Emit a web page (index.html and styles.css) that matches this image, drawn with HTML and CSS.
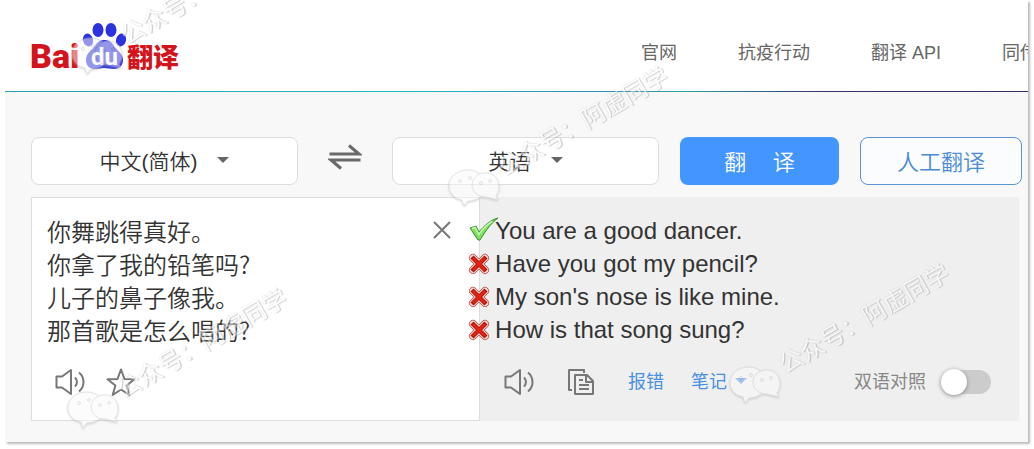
FILE: index.html
```html
<!DOCTYPE html>
<html lang="zh-CN">
<head>
    <meta charset="UTF-8">
    <meta name="viewport" content="width=device-width, initial-scale=1.0">
    <title>百度翻译</title>
    <link rel="stylesheet" href="styles.css">
</head>
<body>
    <svg class="sprite" aria-hidden="true">
        <symbol id="icon-speaker" viewBox="0 0 30 28">
            <path d="M1.500 8.500h5.500l9-6.500v24l-9-6.500H1.500z M20 9.500c2.600 2.400 2.600 6.600 0 9 M24 4.500c6 5 6 14 0 19"/>
        </symbol>
        <symbol id="icon-wrong" viewBox="0 0 22 22">
            <path d="M5 5l12 12M17 5L5 17" stroke="#b8473d" stroke-width="8" stroke-linecap="round"/>
            <path d="M5 5l12 12M17 5L5 17" stroke="#fbe3df" stroke-width="6.500" stroke-linecap="round"/>
            <path d="M4 4l14 14M18 4L4 18" stroke="#b51408" stroke-width="4.500"/>
            <path d="M5 5l12 12M17 5L5 17" stroke="#e22314" stroke-width="2.500"/>
        </symbol>
        <symbol id="icon-wechat" viewBox="0 0 52 38">
            <path d="M20 1C9 1 1 8 1 17c0 5 3 9 7 12l6 2 2 6 4-5c10 0 18-7 18-15S30 1 20 1z"/>
            <path d="M38 4c-8 0-14 5-14 12s6 12 14 12l8 2 4 1-2-4c2-3 3-6 3-9 0-8-5-14-13-14z"/>
            <circle cx="12" cy="12" r="1.500"/>
            <circle cx="22" cy="9" r="1.500"/>
            <circle cx="33" cy="14" r="1.500"/>
            <circle cx="42" cy="12" r="1.500"/>
        </symbol>
    </svg>

    <div class="page">
        <header class="header">
            <a class="logo" href="#" aria-label="百度翻译">
                <svg width="150" height="50" viewBox="0 0 150 50">
                    <text class="logo-bai" x="-1" y="47">Bai</text>
                    <g fill="#2c32dd">
                        <ellipse cx="57" cy="19" rx="5" ry="6.500" transform="rotate(-15 57 19)"/>
                        <ellipse cx="67" cy="9" rx="5.500" ry="7"/>
                        <ellipse cx="80" cy="9" rx="5.500" ry="7"/>
                        <ellipse cx="90" cy="19" rx="5" ry="6.500" transform="rotate(15 90 19)"/>
                        <path d="M73 19c-5 0-7 3-9 6-3 4-9 7-9 14 0 6 4 9 9 9 4 0 6-1 9-1s6 1 10 1c6 0 9-4 9-9 0-7-6-9-9-14-2-4-5-6-10-6z"/>
                    </g>
                    <text class="logo-du" x="60" y="44">du</text>
                    <text class="logo-name" x="96" y="46">翻译</text>
                </svg>
            </a>
            <nav class="nav">
                <a href="#">官网</a>
                <a href="#">抗疫行动</a>
                <a href="#">翻译 API</a>
                <a href="#">同传</a>
            </nav>
        </header>

        <main class="main">
            <div class="controls">
                <select class="language language-from" aria-label="源语言">
                    <option>中文(简体)</option>
                    <option>英语</option>
                </select>
                <button class="swap" type="button" aria-label="切换语言">
                    <svg width="34" height="28" viewBox="0 0 34 28">
                        <path d="M1.500 11H31L21 2.500M32.500 17H3l10 8.500"/>
                    </svg>
                </button>
                <select class="language language-to" aria-label="目标语言">
                    <option>英语</option>
                    <option>中文(简体)</option>
                </select>
                <button class="btn btn-primary" type="button">翻&emsp;&thinsp;译</button>
                <button class="btn btn-outline" type="button">人工翻译</button>
            </div>

            <div class="panels">
                <section class="panel source">
                    <div class="source-input">
                        <textarea rows="4" aria-label="原文" spellcheck="false">你舞跳得真好。
你拿了我的铅笔吗?
儿子的鼻子像我。
那首歌是怎么唱的?</textarea>
                        <button class="icon-btn clear" type="button" aria-label="清空">
                            <svg width="18" height="18" viewBox="0 0 18 18"><path d="M1 1l16 16M17 1L1 17"/></svg>
                        </button>
                    </div>
                    <div class="tools">
                        <button class="icon-btn" type="button" aria-label="朗读原文">
                            <svg width="30" height="28"><use href="#icon-speaker"/></svg>
                        </button>
                        <button class="icon-btn" type="button" aria-label="收藏">
                            <svg width="30" height="28" viewBox="0 0 30 28">
                                <path d="M15 1.500l3.500 9.500 10 .3-7.900 6.200 2.700 9.500-8.300-5.500-8.300 5.500 2.700-9.500-7.900-6.200 10-.3z"/>
                            </svg>
                        </button>
                    </div>
                </section>

                <section class="panel target">
                    <ul class="results">
                        <li>
                            <svg class="mark mark-right" width="30" height="26" viewBox="0 0 30 26">
                                <path d="M1 11l6-2 3 6C15 9 21 3 29 1c-8 6-13 14-18 22H9z" fill="#7be05a" stroke="#3c8f2b" stroke-linejoin="round"/>
                                <path d="M3 11.500l3-1 4 7c4-6 8-10 13-13" stroke="#c8f7b5" stroke-width="1.500"/>
                            </svg>You are a good dancer.
                        </li>
                        <li><svg class="mark" width="22" height="22"><use href="#icon-wrong"/></svg>Have you got my pencil?</li>
                        <li><svg class="mark" width="22" height="22"><use href="#icon-wrong"/></svg>My son's nose is like mine.</li>
                        <li><svg class="mark" width="22" height="22"><use href="#icon-wrong"/></svg>How is that song sung?</li>
                    </ul>
                    <div class="tools">
                        <button class="icon-btn" type="button" aria-label="朗读译文">
                            <svg width="30" height="28"><use href="#icon-speaker"/></svg>
                        </button>
                        <button class="icon-btn" type="button" aria-label="复制">
                            <svg width="28" height="28" viewBox="0 0 28 28">
                                <path d="M17 5V2H2v20h3 M8 7h12l6 6v13H8z M19 7v7h7 M12 12h4M12 17h10M12 21h10"/>
                            </svg>
                        </button>
                        <a class="tool-link" href="#">报错</a>
                        <a class="tool-link note" href="#">笔记</a>
                        <label class="compare">双语对照 <input type="checkbox"></label>
                    </div>
                </section>
            </div>
        </main>

        <div class="watermark watermark-1" aria-hidden="true"><svg width="52" height="38"><use href="#icon-wechat"/></svg><span>公众号：阿虚同学</span></div>
        <div class="watermark watermark-2" aria-hidden="true"><svg width="52" height="38"><use href="#icon-wechat"/></svg><span>公众号：阿虚同学</span></div>
        <div class="watermark watermark-3" aria-hidden="true"><svg width="52" height="38"><use href="#icon-wechat"/></svg><span>公众号：阿虚同学</span></div>
        <div class="watermark watermark-4" aria-hidden="true"><svg width="52" height="38"><use href="#icon-wechat"/></svg><span>公众号：阿虚同学</span></div>
    </div>
</body>
</html>
```
FILE: styles.css
```css
* {
    box-sizing: border-box;
}
body {
    margin: 0;
    background-color: #fff;
    color: #333;
    font-family: "Liberation Sans", "Noto Sans CJK SC", sans-serif;
}
a {
    text-decoration: none;
}
button,
select,
textarea {
    font-family: inherit;
    color: inherit;
}
.sprite {
    position: absolute;
    width: 0;
    height: 0;
}
.page {
    position: relative;
    margin: 0 6px 4px 5px;
    overflow: hidden;
    background-color: #f8f8f8;
    box-shadow: 2px 2px 2px #bbb;
}

/* header */
.header {
    display: flex;
    align-items: center;
    padding-left: 26px;
    background-color: #fff;
    height: 91px;
}
.header-line,
.header + .main::before {
    content: "";
    display: block;
    height: 1px;
    margin: 0 -9px 45px -26px;
    background: linear-gradient(to right, #2a9fb0, #2cb5c4 40%, #2f8fb5 58%, #2aa5a5 66%, #33336f 80%, #3a2c60);
}
.logo {
    flex: 1;
}
.logo svg {
    display: block;
    overflow: visible;
}
.logo-bai {
    font: 900 34px Roboto, sans-serif;
    fill: #d4141c;
}
.logo-du {
    font: bold 24px Roboto, sans-serif;
    fill: #fff;
}
.logo-name {
    font: 900 26px "Noto Sans CJK SC", sans-serif;
    fill: #d4141c;
}
.nav {
    flex: 0 0 387px;
    display: flex;
    gap: 61px;
    padding-top: 14px;
    overflow: hidden;
    white-space: nowrap;
}
.nav a {
    color: #666;
    font-size: 18px;
    line-height: 26px;
}

/* language bar */
.main {
    padding: 0 9px 21px 26px;
}
.controls {
    display: flex;
    align-items: center;
    margin: 0 -3px 12px 0;
}
.language {
    flex: 1;
    min-width: 0;
    height: 48px;
    padding: 0 32px 0 0;
    appearance: none;
    border: 1px solid #ddd;
    border-radius: 8px;
    background: #fff url("data:image/svg+xml,%3Csvg xmlns='http://www.w3.org/2000/svg' width='12' height='6'%3E%3Cpath d='M0 0h12L6 6z' fill='%23666'/%3E%3C/svg%3E") no-repeat;
    font-size: 21px;
    font-weight: 350;
    text-align: center;
    text-align-last: center;
}
.language-from {
    background-position: calc(50% + 58px) 19px;
}
.language-to {
    background-position: calc(50% + 31px) 19px;
}
.swap {
    flex: 0 0 94px;
    padding: 0 0 8px;
    border: none;
    background: none;
}
.swap svg {
    display: block;
    margin: 0 auto;
    fill: none;
    stroke: #6a6a6a;
    stroke-width: 3;
}
.btn {
    height: 48px;
    margin-left: 21px;
    padding-bottom: 4px;
    border-radius: 8px;
    font-size: 22px;
    font-weight: 350;
}
.btn-primary {
    width: 159px;
    border: none;
    background-color: #4395ff;
    color: #fff;
}
.btn-outline {
    width: 162px;
    border: 1px solid #5b93d3;
    background-color: #fbfcfe;
    color: #4a8bd8;
}

/* panels */
.panels {
    display: grid;
    grid-template-columns: 5fr 6fr;
}
.panel {
    display: flex;
    flex-direction: column;
    justify-content: space-between;
    min-height: 224px;
    padding: 16px 15px 20px;
    border: 1px solid #ddd;
    font-size: 24px;
    line-height: 33px;
}
.source {
    background-color: #fff;
}
.source-input {
    display: flex;
    align-items: flex-start;
}
.source textarea {
    flex: 1;
    min-width: 0;
    padding: 0;
    border: none;
    outline: none;
    resize: none;
    overflow: hidden;
    background: none;
    font-family: "Noto Sans CJK SC", sans-serif;
    font-size: 24px;
    font-weight: 350;
    line-height: 33px;
}
.icon-btn {
    padding: 0;
    border: none;
    background: none;
    cursor: pointer;
}
.icon-btn svg {
    display: block;
    fill: none;
    stroke: #777;
    stroke-width: 2;
    stroke-linejoin: round;
}
.clear {
    padding: 7px 13px 0 0;
}
.target {
    padding-right: 27px;
    border-color: #efefef;
    border-left: none;
    background-color: #efefef;
}
.results {
    margin: 0;
    padding: 0;
    list-style: none;
}
.results li {
    position: relative;
}
.mark {
    position: absolute;
    left: -27px;
    top: 6px;
    fill: none;
}
.mark-right {
    left: -26px;
    top: 3px;
}
.tools {
    display: flex;
    align-items: center;
    height: 36px;
    gap: 21px;
    padding-left: 8px;
}
.target .tools {
    gap: 27px;
    padding-left: 9px;
}
.target .icon-btn {
    margin-right: 6px;
}
.tool-link {
    color: #4a8fdf;
    font-size: 18px;
}
.note::after {
    content: "";
    display: inline-block;
    margin-left: 8px;
    border: 6px solid transparent;
    border-top-color: #4a8fdf;
    border-bottom: none;
    vertical-align: 4px;
}
.compare {
    display: flex;
    align-items: center;
    gap: 16px;
    margin-left: auto;
    color: #888;
    font-size: 18px;
}
.compare input {
    appearance: none;
    width: 49px;
    height: 24px;
    margin: 0;
    border-radius: 12px;
    background-color: #ccc;
}
.compare input::before {
    content: "";
    display: block;
    width: 26px;
    height: 26px;
    margin: -1px;
    border-radius: 50%;
    background-color: #fff;
    box-shadow: 0 1px 4px #888;
}
.compare input:checked::before {
    margin-left: 24px;
}

/* watermarks */
.watermark {
    position: absolute;
    width: 52px;
    height: 38px;
    opacity: 0.5;
    pointer-events: none;
}
.watermark svg {
    display: block;
    overflow: visible;
    fill: #fafafa;
    stroke: #ccc;
    stroke-width: 1;
    filter: drop-shadow(0 1px 1px #aaa);
}
.watermark span {
    position: absolute;
    left: 52px;
    top: -11px;
    color: #fff;
    font-size: 24px;
    line-height: 24px;
    white-space: nowrap;
    text-shadow: 1px 1px 1px #999, 0 0 2px #bbb;
    transform: rotate(-30deg);
    transform-origin: 0 50%;
}
.watermark-1 {
    left: 66px;
    top: 37px;
}
.watermark-2 {
    left: 443px;
    top: 169px;
}
.watermark-3 {
    left: 62px;
    top: 391px;
}
.watermark-4 {
    left: 724px;
    top: 366px;
}
```
